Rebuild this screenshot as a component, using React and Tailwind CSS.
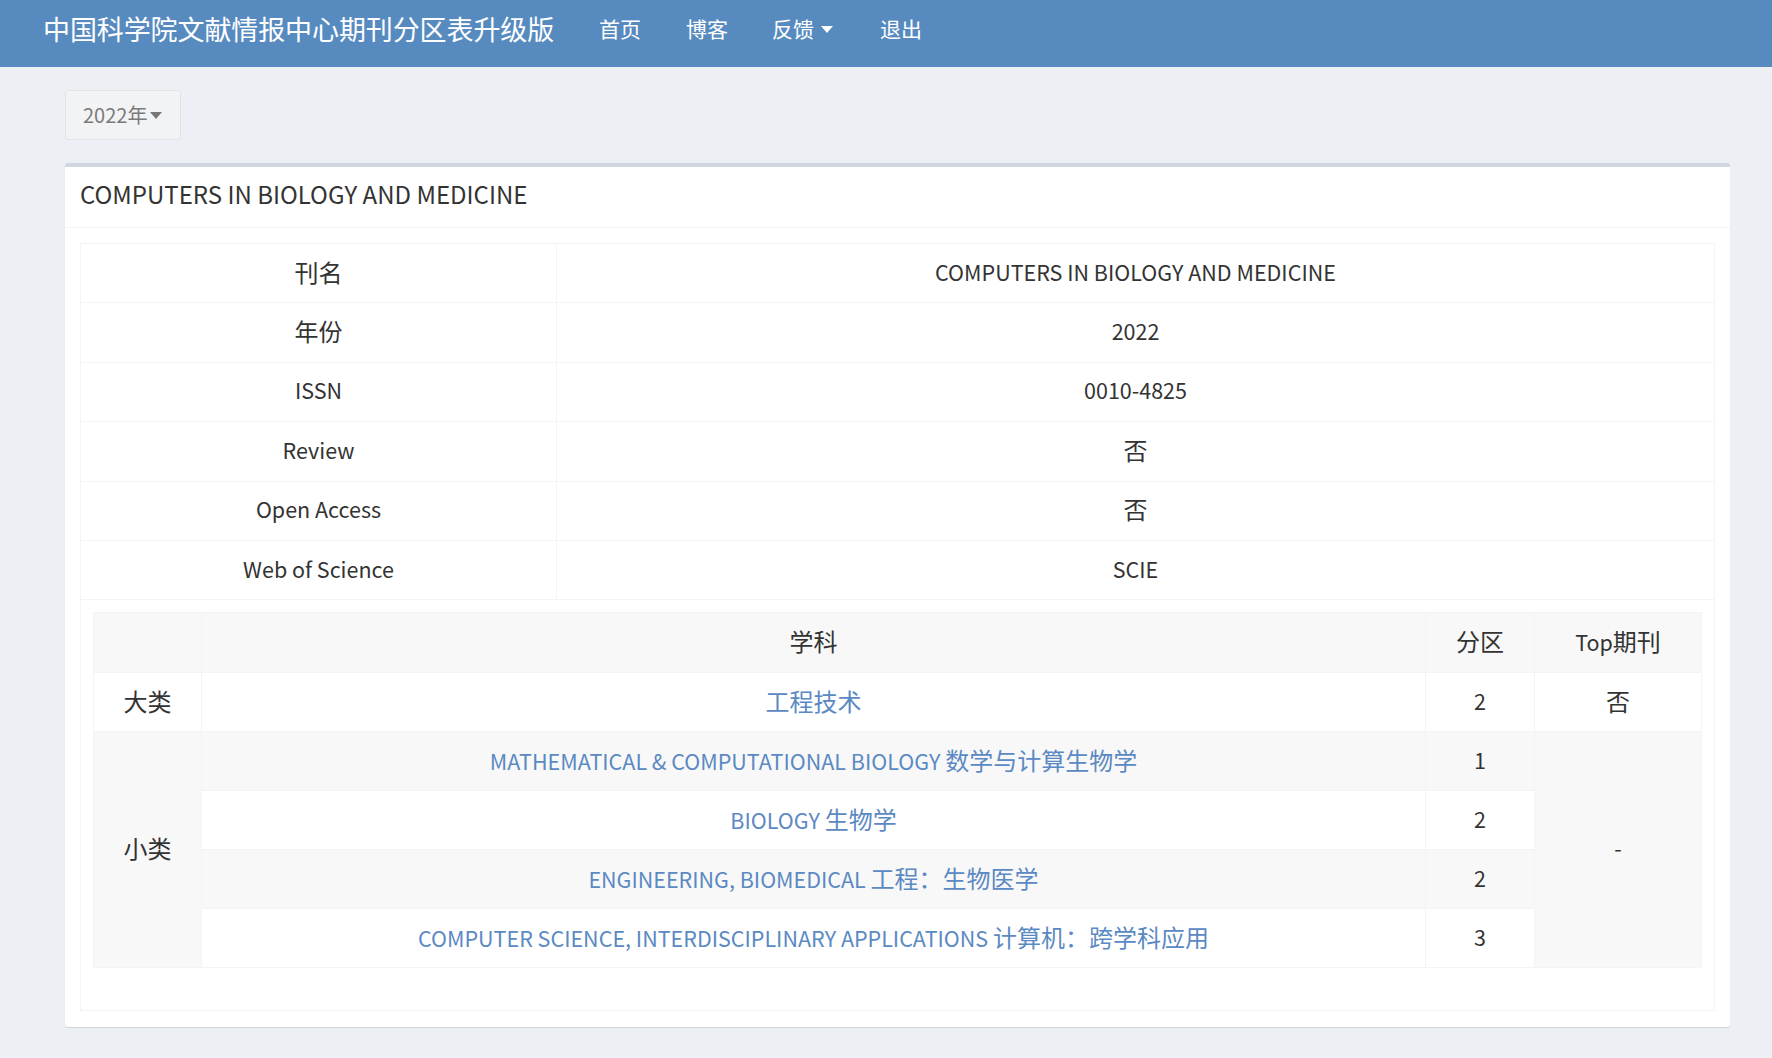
import React from "react";

const Caret = ({ className }) => (
  <span
    className={
      "inline-block w-0 h-0 border-l-transparent border-r-transparent " + className
    }
  />
);

// split mixed text into latin / CJK runs; CJK glyphs are shown a little larger
const T = ({ s }) => {
  const parts = s.split(/([\u3000-\u9fff\uff00-\uffef]+)/);
  return (
    <>
      {parts.map((p, i) =>
        /[\u3000-\u9fff\uff00-\uffef]/.test(p) ? (
          <span key={i} className="text-[24px]">
            {p}
          </span>
        ) : (
          <span key={i}>{p}</span>
        )
      )}
    </>
  );
};

const rows = [
  ["刊名", "COMPUTERS IN BIOLOGY AND MEDICINE"],
  ["年份", "2022"],
  ["ISSN", "0010-4825"],
  ["Review", "否"],
  ["Open Access", "否"],
  ["Web of Science", "SCIE"],
];

const subs = [
  ["MATHEMATICAL & COMPUTATIONAL BIOLOGY 数学与计算生物学", "1"],
  ["BIOLOGY 生物学", "2"],
  ["ENGINEERING, BIOMEDICAL 工程：生物医学", "2"],
  ["COMPUTER SCIENCE, INTERDISCIPLINARY APPLICATIONS 计算机：跨学科应用", "3"],
];

const cell = "border border-[#f4f4f4] text-center align-middle pb-[3px]";

export default function App() {
  return (
    <div className="min-h-[1058px] bg-[#ecf0f5] font-['Noto_Sans_CJK_SC','Noto_Sans',sans-serif] text-[#333]">
      {/* navbar */}
      <div className="h-[67px] bg-[#578bbf] flex items-center pl-[43px] text-white">
        <div className="text-[27px] leading-none tracking-[-0.1px] pb-[10px]">中国科学院文献情报中心期刊分区表升级版</div>
        <div className="flex items-center ml-[45px] text-[21px] leading-none pb-[10px]">
          <span>首页</span>
          <span className="ml-[45px]">博客</span>
          <span className="ml-[44px] flex items-center">
            反馈
            <Caret className="ml-[7px] mt-[2px] border-l-[6px] border-r-[6px] border-t-[7px] border-t-white" />
          </span>
          <span className="ml-[47px]">退出</span>
        </div>
      </div>

      <div className="px-[65px] pt-[23px]">
        {/* year dropdown */}
        <div className="w-[116px] h-[50px] bg-[#f2f3f5] border border-[#e1e3e6] rounded-[3px] flex items-center pl-[17px] text-[20px] text-[#7a7a7a]">
          <span>2022年</span>
          <Caret className="ml-[3px] mt-[1px] border-l-[6px] border-r-[6px] border-t-[7px] border-t-[#777]" />
        </div>

        {/* card */}
        <div className="mt-[23px] w-[1665px] bg-white border-t-[4px] border-[#d2d6de] rounded-[3px] shadow-[0_1px_1px_rgba(0,0,0,0.12)]">
          <div className="h-[61px] flex items-center pl-[15px] border-b border-[#f4f4f4] text-[24px] text-[#333]">
            <span className="pb-[7px]">COMPUTERS IN BIOLOGY AND MEDICINE</span>
          </div>
          <div className="px-[15px] pt-[15px] pb-[16px]">
            <table className="w-full border-collapse border border-[#f4f4f4] text-[21.5px]">
              <tbody>
                {rows.map(([k, v]) => (
                  <tr key={k}>
                    <td className={"h-[59.4px] w-[476px] " + cell}>
                      <T s={k} />
                    </td>
                    <td className={"h-[59.4px] " + cell}>
                      <T s={v} />
                    </td>
                  </tr>
                ))}
                <tr>
                  <td colSpan={2} className="border border-[#f4f4f4] pt-[12px] pb-[42px] px-[12px]">
                    <table className="w-full border-collapse border border-[#f4f4f4]">
                      <tbody>
                        <tr className="bg-[#f8f8f8]">
                          <td className="h-[60px] w-[108px] border border-[#f4f4f4]"></td>
                          <td className={cell}>
                            <T s="学科" />
                          </td>
                          <td className={"w-[109px] " + cell}>
                            <T s="分区" />
                          </td>
                          <td className={"w-[167px] " + cell}>
                            <T s="Top期刊" />
                          </td>
                        </tr>
                        <tr className="bg-white">
                          <td className={"h-[59px] " + cell}>
                            <T s="大类" />
                          </td>
                          <td className={cell + " text-[#5b89c3]"}>
                            <T s="工程技术" />
                          </td>
                          <td className={cell}>2</td>
                          <td className={cell}>
                            <T s="否" />
                          </td>
                        </tr>
                        {subs.map(([s, q], i) => (
                          <tr key={s} className={i % 2 === 0 ? "bg-[#f8f8f8]" : "bg-white"}>
                            {i === 0 && (
                              <td rowSpan={4} className={cell + " bg-[#f8f8f8]"}>
                                <T s="小类" />
                              </td>
                            )}
                            <td className={"h-[59px] " + cell + " text-[#5b89c3]"}>
                              <T s={s} />
                            </td>
                            <td className={cell}>{q}</td>
                            {i === 0 && (
                              <td rowSpan={4} className={cell + " bg-[#f8f8f8]"}>
                                -
                              </td>
                            )}
                          </tr>
                        ))}
                      </tbody>
                    </table>
                  </td>
                </tr>
              </tbody>
            </table>
          </div>
        </div>
      </div>
    </div>
  );
}
